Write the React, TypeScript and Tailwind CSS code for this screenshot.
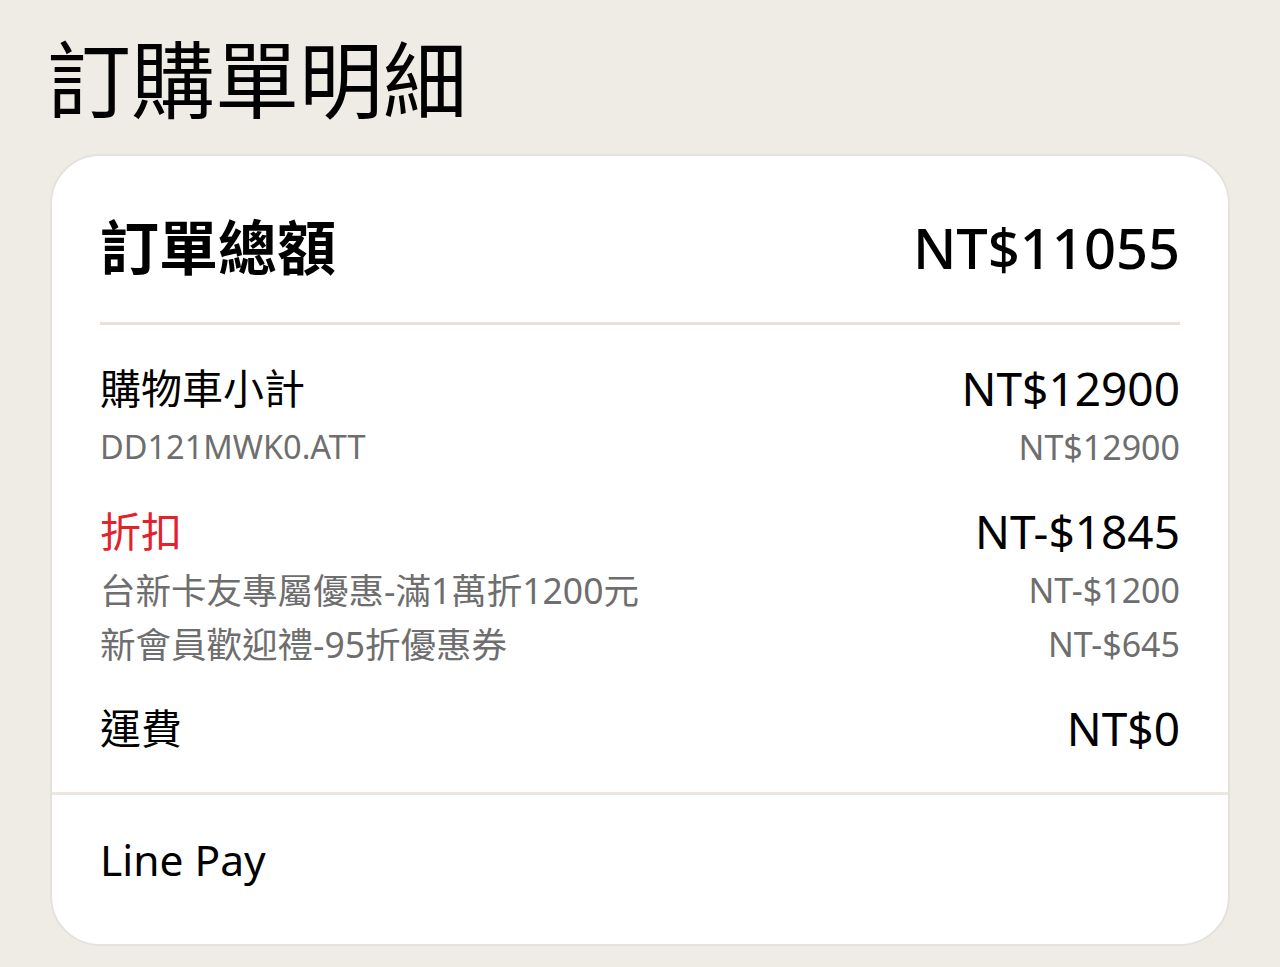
const discounts = [
  { name: "台新卡友專屬優惠-滿1萬折1200元", amount: "NT-$1200" },
  { name: "新會員歡迎禮-95折優惠券", amount: "NT-$645" },
];

function Row({
  label,
  value,
  red,
  children,
}: {
  label: string;
  value: string;
  red?: boolean;
  children?: React.ReactNode;
}) {
  return (
    <div>
      <div className="flex items-center justify-between leading-[58px]">
        <span className={red ? "text-[41px] text-[#e3222b]" : "text-[41px] text-black"}>{label}</span>
        <span className="text-[46px] text-black">{value}</span>
      </div>
      {children && <div className="mt-[3px]">{children}</div>}
    </div>
  );
}

function Sub({ name, amount, small }: { name: string; amount: string; small?: boolean }) {
  return (
    <div className="flex items-center justify-between leading-[54px] text-[#6e6e6e]">
      <span className={small ? "text-[32.5px]" : "text-[35.5px]"}>{name}</span>
      <span className="text-[34px]">{amount}</span>
    </div>
  );
}

export default function App() {
  return (
    <div className="min-h-[967px] bg-[#efebe5] pt-[30px] font-['Noto_Sans','Noto_Sans_CJK_TC',sans-serif]">
      <h1 className="px-[47px] text-[84px] leading-[100px] text-black">訂購單明細</h1>

      <div className="mx-[50px] mt-[24px] overflow-hidden rounded-[50px] border-2 border-[#e4e2de] bg-white">
        <div className="px-[48px]">
          <div className="flex items-center justify-between pt-[56px] pb-[40px] leading-[70px]">
            <span className="text-[59px] font-bold text-black">訂單總額</span>
            <span className="text-[56px] font-medium text-black">NT$11055</span>
          </div>
          <div className="h-[3px] bg-[#e6e2db]" />

          <div className="flex flex-col gap-[28px] pt-[34px] pb-[35px]">
            <Row label="購物車小計" value="NT$12900">
              <Sub name="DD121MWK0.ATT" amount="NT$12900" small />
            </Row>
            <Row label="折扣" value="NT-$1845" red>
              {discounts.map((d) => (
                <Sub key={d.name} name={d.name} amount={d.amount} />
              ))}
            </Row>
            <Row label="運費" value="NT$0" />
          </div>
        </div>

        <div className="h-[3px] bg-[#ebe7e0]" />

        <div className="px-[48px] pt-[40px] pb-[59px] text-[42.5px] leading-[50px] text-black">
          Line Pay
        </div>
      </div>
    </div>
  );
}
